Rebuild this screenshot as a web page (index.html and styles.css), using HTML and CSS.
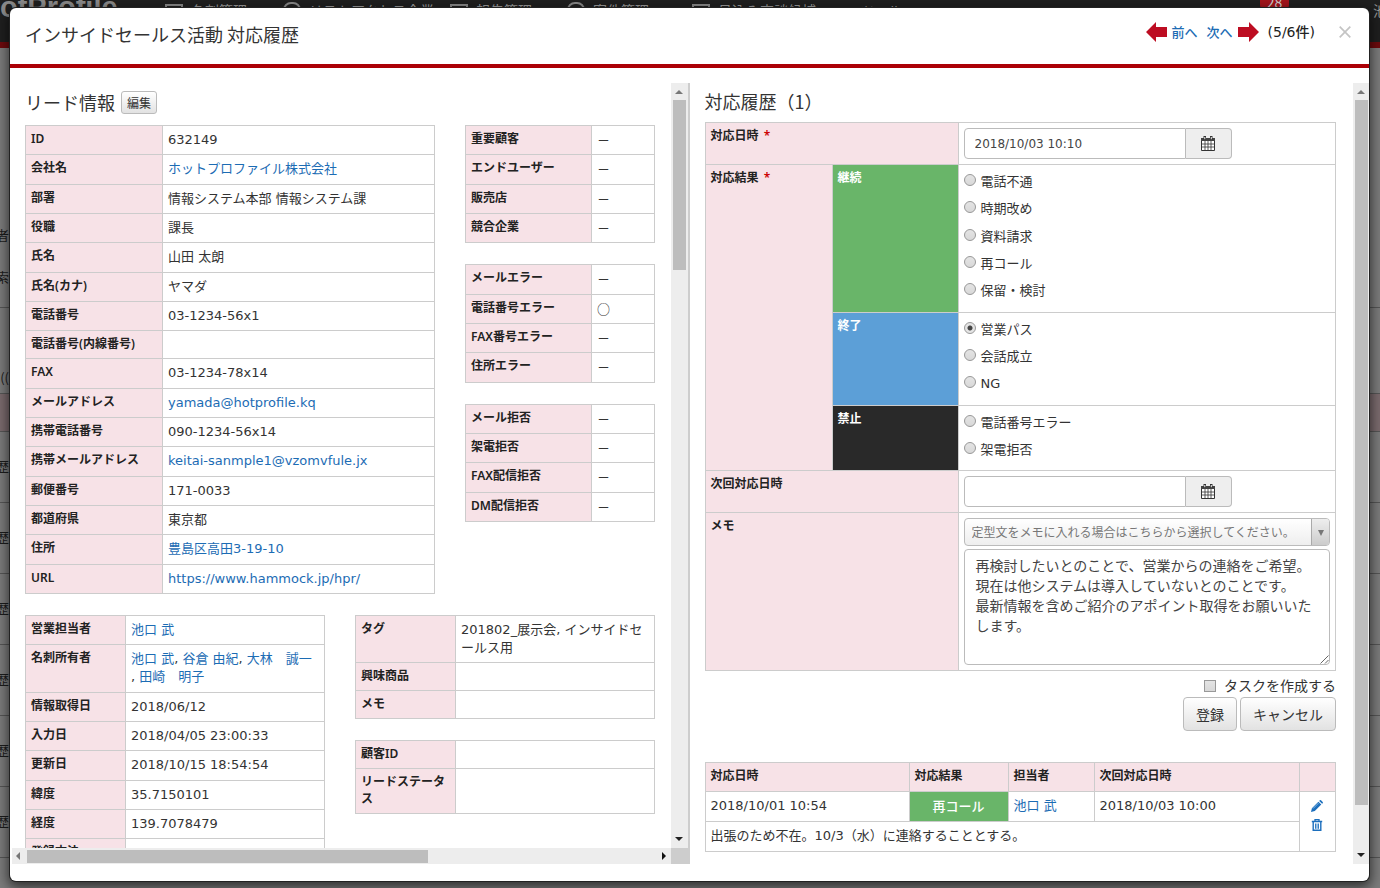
FILE: index.html
```html
<!DOCTYPE html>
<html lang="ja">
<head>
<meta charset="utf-8">
<title>インサイドセールス活動 対応履歴</title>
<link rel="stylesheet" href="styles.css">
</head>
<body>
<svg width="0" height="0" class="defs" aria-hidden="true">
  <symbol id="arrow" viewBox="0 0 21 20"><path d="M0 10 10 0v5h11v10H10v5z" fill="#bd0d22"/></symbol>
  <symbol id="calendar" viewBox="0 0 14 15">
    <path d="M1 3h12v11H1z" fill="#fff"/>
    <path d="M.5 2.500h13v12H.5zM.5 4.500h13" fill="none" stroke="#333"/>
    <path d="M1 8h12M1 11h12M4 5v9M7 5v9M10 5v9" fill="none" stroke="#333" stroke-width=".8"/>
    <path d="M0 2h14v3H0z" fill="#444"/>
    <path d="M2.500 0h2.500v4H2.500zM9 0h2.500v4H9z" fill="#333"/>
    <path d="M3.300 1h1v2.200h-1zM9.800 1h1v2.200h-1z" fill="#eee"/>
  </symbol>
  <symbol id="pencil" viewBox="0 0 12 12"><path d="M0 12l.9-3.800L7.400 1.700l2.900 2.900-6.500 6.500zM8.200.9l.6-.6q.6-.5 1.200 0l1.700 1.700q.5.600 0 1.200l-.6.6z" fill="#1c6fbd"/><path d="M2 8.600 7.500 3.100" stroke="#9cc6ea" stroke-width=".8"/></symbol>
  <symbol id="trash" viewBox="0 0 11 12"><path d="M3.500 2V.7h4V2M.3 2.500h10.400" fill="none" stroke="#1c6fbd" stroke-width="1.300"/><path d="M1.700 3v8.300h7.600V3" fill="none" stroke="#1c6fbd" stroke-width="1.400"/><path d="M4 4.500v5.300M5.500 4.500v5.300M7 4.500v5.300" stroke="#1c6fbd" stroke-width=".9"/></symbol>
</svg>

<div class="backdrop" aria-hidden="true">
  <div class="topbar">
    <b class="brand">otProfile</b>
    <span class="nav-item nav-1"><i class="glyph card"></i>名刺管理</span>
    <span class="nav-item nav-2"><i class="glyph round"></i>リストアクセス企業</span>
    <span class="nav-item nav-3"><i class="glyph card"></i>報告管理</span>
    <span class="nav-item nav-4"><i class="glyph round"></i>案件管理</span>
    <span class="nav-item nav-5"><i class="glyph card"></i>見込み商談候補</span>
    <span class="nav-item nav-6">ツール</span>
    <span class="badge">28</span>
    <span class="nav-item nav-7">池</span>
  </div>
  <div class="backpage">
    <div class="strip strip-head"><span>者</span><span>索</span></div>
    <div class="strip strip-tall"><span>((</span></div>
    <div class="strip strip-pink"></div>
    <div class="strip strip-row"><span>歴</span></div>
    <div class="strip strip-row"><span>歴</span></div>
    <div class="strip strip-row"><span>歴</span></div>
    <div class="strip strip-row"><span>歴</span></div>
    <div class="strip strip-row"><span>歴</span></div>
    <div class="strip strip-row"><span>歴</span></div>
  </div>
</div>

<main class="modal" role="dialog" aria-labelledby="dialog-title">
  <header class="modal-header">
    <h1 id="dialog-title">インサイドセールス活動 対応履歴</h1>
    <nav class="pager">
      <a href="#"><svg class="arrow"><use href="#arrow"/></svg>前へ</a>
      <a href="#">次へ<svg class="arrow flip"><use href="#arrow"/></svg></a>
      <span class="count">(5/6件)</span>
    </nav>
    <button class="close" type="button" aria-label="閉じる"><svg viewBox="0 0 12 12"><path d="M.7.700l10.600 10.600M11.300.700.700 11.300" stroke="#c4c4c4" stroke-width="1.700"/></svg></button>
  </header>

  <div class="modal-body">
    <section class="pane lead">
      <div class="lead-content">
        <div class="heading"><h2>リード情報</h2><button class="btn btn-small" type="button">編集</button></div>
        <div class="lead-top">
          <table class="info wide">
            <tr><th scope="row">ID</th><td>632149</td></tr>
            <tr><th scope="row">会社名</th><td><a href="#">ホットプロファイル株式会社</a></td></tr>
            <tr><th scope="row">部署</th><td>情報システム本部 情報システム課</td></tr>
            <tr><th scope="row">役職</th><td>課長</td></tr>
            <tr><th scope="row">氏名</th><td>山田 太朗</td></tr>
            <tr><th scope="row">氏名(カナ)</th><td>ヤマダ</td></tr>
            <tr><th scope="row">電話番号</th><td>03-1234-56x1</td></tr>
            <tr><th scope="row">電話番号(内線番号)</th><td></td></tr>
            <tr><th scope="row">FAX</th><td>03-1234-78x14</td></tr>
            <tr><th scope="row">メールアドレス</th><td><a href="#">yamada@hotprofile.kq</a></td></tr>
            <tr><th scope="row">携帯電話番号</th><td>090-1234-56x14</td></tr>
            <tr><th scope="row">携帯メールアドレス</th><td><a href="#">keitai-sanmple1@vzomvfule.jx</a></td></tr>
            <tr><th scope="row">郵便番号</th><td>171-0033</td></tr>
            <tr><th scope="row">都道府県</th><td>東京都</td></tr>
            <tr><th scope="row">住所</th><td><a href="#">豊島区高田3-19-10</a></td></tr>
            <tr><th scope="row">URL</th><td><a href="#">https://www.hammock.jp/hpr/</a></td></tr>
          </table>
          <div class="stack">
            <table class="info flags">
              <tr><th scope="row">重要顧客</th><td>－</td></tr>
              <tr><th scope="row">エンドユーザー</th><td>－</td></tr>
              <tr><th scope="row">販売店</th><td>－</td></tr>
              <tr><th scope="row">競合企業</th><td>－</td></tr>
            </table>
            <table class="info flags">
              <tr><th scope="row">メールエラー</th><td>－</td></tr>
              <tr><th scope="row">電話番号エラー</th><td>○</td></tr>
              <tr><th scope="row">FAX番号エラー</th><td>－</td></tr>
              <tr><th scope="row">住所エラー</th><td>－</td></tr>
            </table>
            <table class="info flags">
              <tr><th scope="row">メール拒否</th><td>－</td></tr>
              <tr><th scope="row">架電拒否</th><td>－</td></tr>
              <tr><th scope="row">FAX配信拒否</th><td>－</td></tr>
              <tr><th scope="row">DM配信拒否</th><td>－</td></tr>
            </table>
          </div>
        </div>
        <div class="lead-bottom">
          <table class="info half">
            <tr><th scope="row">営業担当者</th><td><a href="#">池口 武</a></td></tr>
            <tr><th scope="row">名刺所有者</th><td><a href="#">池口 武</a>, <a href="#">谷倉 由紀</a>, <a href="#">大林　誠一</a><br>, <a href="#">田崎　明子</a></td></tr>
            <tr><th scope="row">情報取得日</th><td>2018/06/12</td></tr>
            <tr><th scope="row">入力日</th><td>2018/04/05 23:00:33</td></tr>
            <tr><th scope="row">更新日</th><td>2018/10/15 18:54:54</td></tr>
            <tr><th scope="row">緯度</th><td>35.7150101</td></tr>
            <tr><th scope="row">経度</th><td>139.7078479</td></tr>
            <tr><th scope="row">登録方法</th><td></td></tr>
          </table>
          <div class="stack">
            <table class="info half">
              <tr><th scope="row">タグ</th><td>201802_展示会, インサイドセ<br>ールス用</td></tr>
              <tr><th scope="row">興味商品</th><td></td></tr>
              <tr><th scope="row">メモ</th><td></td></tr>
            </table>
            <table class="info half">
              <tr><th scope="row">顧客ID</th><td></td></tr>
              <tr><th scope="row">リードステータス</th><td></td></tr>
            </table>
          </div>
        </div>
      </div>
      <div class="vbar"><i class="tri up"></i><div class="thumb lead-thumb"></div><i class="tri down"></i></div>
      <div class="hbar"><i class="tri left"></i><div class="hthumb"></div><i class="tri right"></i></div>
      <div class="corner"></div>
    </section>

    <section class="pane history">
      <form class="history-content">
        <h2>対応履歴（1）</h2>
        <table class="info entry">
          <colgroup><col class="c-label"><col class="c-group"><col></colgroup>
          <tr><th colspan="2" scope="row"><label for="when">対応日時 <span class="req">*</span></label></th>
            <td><div class="date"><input id="when" type="text" value="2018/10/03 10:10"><button type="button" aria-label="日付を選択"><svg><use href="#calendar"/></svg></button></div></td></tr>
          <tr><th rowspan="3" scope="row">対応結果 <span class="req">*</span></th><th class="group go">継続</th>
            <td><div class="choices">
              <label><input type="radio" name="result">電話不通</label>
              <label><input type="radio" name="result">時期改め</label>
              <label><input type="radio" name="result">資料請求</label>
              <label><input type="radio" name="result">再コール</label>
              <label><input type="radio" name="result">保留・検討</label></div></td></tr>
          <tr><th class="group end">終了</th>
            <td><div class="choices">
              <label><input type="radio" name="result" checked>営業パス</label>
              <label><input type="radio" name="result">会話成立</label>
              <label><input type="radio" name="result">NG</label></div></td></tr>
          <tr><th class="group stop">禁止</th>
            <td><div class="choices">
              <label><input type="radio" name="result">電話番号エラー</label>
              <label><input type="radio" name="result">架電拒否</label></div></td></tr>
          <tr><th colspan="2" scope="row"><label for="next">次回対応日時</label></th>
            <td><div class="date"><input id="next" type="text"><button type="button" aria-label="日付を選択"><svg><use href="#calendar"/></svg></button></div></td></tr>
          <tr><th colspan="2" scope="row"><label for="memo">メモ</label></th>
            <td><div class="memo">
              <div class="select"><select aria-label="定型文"><option>定型文をメモに入れる場合はこちらから選択してください。</option></select><span class="select-arrow"></span></div>
              <div class="area"><textarea id="memo">再検討したいとのことで、営業からの連絡をご希望。
現在は他システムは導入していないとのことです。
最新情報を含めご紹介のアポイント取得をお願いいたします。</textarea><svg class="grip" viewBox="0 0 9 9"><path d="M.5 8.500l8-8M5 8.500 8.500 5" stroke="#666"/></svg></div>
            </div></td></tr>
        </table>
        <div class="task"><label><input type="checkbox">タスクを作成する</label></div>
        <div class="actions"><button class="btn" type="submit">登録</button><button class="btn" type="button">キャンセル</button></div>
        <table class="info log">
          <colgroup><col class="l-date"><col class="l-result"><col class="l-person"><col class="l-next"><col></colgroup>
          <thead><tr><th scope="col">対応日時</th><th scope="col">対応結果</th><th scope="col">担当者</th><th scope="col">次回対応日時</th><th></th></tr></thead>
          <tbody>
            <tr><td>2018/10/01 10:54</td><td class="result">再コール</td><td><a href="#">池口 武</a></td><td>2018/10/03 10:00</td>
              <td rowspan="2"><div class="tools"><button type="button" aria-label="編集"><svg><use href="#pencil"/></svg></button><button type="button" aria-label="削除"><svg><use href="#trash"/></svg></button></div></td></tr>
            <tr><td colspan="4">出張のため不在。10/3（水）に連絡することとする。</td></tr>
          </tbody>
        </table>
      </form>
      <div class="vbar"><i class="tri up"></i><div class="thumb history-thumb"></div><i class="tri down"></i></div>
    </section>
  </div>
</main>
</body>
</html>
```
FILE: styles.css
```css
* { box-sizing: border-box; }
body {
  margin: 0;
  height: 100vh;
  padding: 8px 11px 7px 10px;
  overflow: hidden;
  background: #777;
  color: #333;
  font: 13px/1.41 "DejaVu Sans", "Noto Sans CJK JP", sans-serif;
}
a { color: #1c6cb4; text-decoration: none; }
h1, h2 { margin: 0; font-size: 18px; font-weight: 400; line-height: 24px; font-family: "Noto Sans CJK JP", sans-serif; }
h1 { word-break: keep-all; }
button { font-family: inherit; color: #333; padding: 0; }
.defs { position: absolute; }

/* Dimmed page under the dialog */
.backdrop { position: absolute; inset: 0; overflow: hidden; }
.topbar { position: relative; height: 48px; background: #1f1f1f; border-bottom: 6px solid #6d0a0d; color: #999; font: 14px/20px "Noto Sans CJK JP", sans-serif; }
.brand { position: absolute; left: 0; top: -8px; font: bold 29px/30px "Liberation Sans", sans-serif; color: #8a8a8a; }
.nav-item { position: absolute; top: 0; display: flex; gap: 8px; white-space: nowrap; }
.nav-1 { left: 165px; } .nav-2 { left: 283px; } .nav-3 { left: 450px; } .nav-4 { left: 567px; }
.nav-5 { left: 692px; } .nav-6 { left: 860px; } .nav-7 { left: 1373px; }
.glyph { width: 18px; height: 14px; margin-top: 4px; border: 2px solid #888; }
.glyph.round { border-radius: 8px 8px 0 0; margin-top: 2px; }
.badge { position: absolute; left: 1260px; top: -9px; width: 29px; height: 18px; border-radius: 4px; background: #a3141b; color: #ccc; text-align: center; line-height: 23px; }
.backpage { background: #7b7b7b; height: 100%; }
.strip { border-bottom: 1px solid #555; font: 13px/20px "Noto Sans CJK JP", sans-serif; color: #1c1c1c; white-space: nowrap; }
.strip span { display: flex; justify-content: flex-end; width: 9px; }
.strip-head { height: 260px; padding-top: 177px; display: grid; align-content: start; gap: 22px; }
.strip-tall { height: 86px; padding-top: 60px; }
.strip-pink { height: 38px; background: #7a6a6d; }
.strip-row { height: 71px; padding-top: 24px; }

/* Dialog frame */
.modal { position: relative; display: flex; flex-direction: column; height: 100%; background: #fff; border-radius: 6px; box-shadow: 0 0 0 1px #222, 0 4px 12px 2px rgba(0, 0, 0, .6); }
.modal-header { display: flex; align-items: flex-start; height: 60px; padding: 14px 18px 0 15px; border-bottom: 4px solid #ab0006; }
.pager { display: flex; gap: 9px; margin-left: auto; font: 500 13px/20px "Noto Sans CJK JP", sans-serif; }
.pager a { display: flex; gap: 5px; align-items: center; }
.arrow { width: 21px; height: 20px; }
.flip { transform: scaleX(-1); }
.count { font-family: "DejaVu Sans", "Noto Sans CJK JP", sans-serif; font-size: 14px; color: #222; }
.close { border: 0; background: none; width: 12px; height: 12px; margin: 4px 0 0 24px; line-height: 0; }
.close svg { width: 12px; height: 12px; }
.modal-body { flex: 1; min-height: 0; display: grid; grid-template: minmax(0, 1fr) / 1fr 1fr; padding: 15px 0 17px; }

/* Scrolling panes */
.pane { display: grid; min-width: 0; min-height: 0; grid-template: minmax(0, 1fr) / minmax(0, 1fr) 16px; }
.pane.lead { grid-template: minmax(0, 1fr) 16px / minmax(0, 1fr) 17px; border-right: 2px solid #cdcdcd; }
.lead-content { overflow: hidden; padding: 7px 0 0 15px; }
.history-content { overflow: hidden; padding: 6px 17px 0 15px; }
.vbar { display: flex; flex-direction: column; align-items: center; background: #ededed; padding: 7px 0; }
.vbar .down { margin-top: auto; }
.thumb { width: 13px; margin-top: 6px; background: #bdbdbd; }
.lead-thumb { height: 170px; }
.history-thumb { height: 705px; }
.hbar { display: flex; align-items: center; background: #ededed; margin-left: 2px; padding: 0 5px 0 4px; }
.hbar .right { margin-left: auto; }
.hthumb { width: 401px; height: 13px; margin-left: 7px; background: #bdbdbd; }
.corner { background: #cdcdcd; }
.tri { width: 0; height: 0; border: 4px solid transparent; flex: none; }
.tri.up { border-top: 0; border-bottom-color: #777; }
.tri.down { border-bottom: 0; border-top-color: #222; }
.tri.left { border-left: 0; border-right-color: #777; }
.tri.right { border-right: 0; border-left-color: #111; }

/* Tables */
.info { border-collapse: collapse; table-layout: fixed; }
.info th, .info td { border: 1px solid #ccc; padding: 5px; text-align: left; vertical-align: top; }
.info th { background: #f7e2e7; font-family: "Noto Sans", "Noto Sans CJK JP", sans-serif; font-size: 12px; font-weight: 600; color: #222; }
.heading { display: flex; gap: 6px; align-items: center; margin-bottom: 11px; }
.lead-top, .lead-bottom { display: flex; align-items: flex-start; gap: 30px; }
.lead-bottom { margin-top: 21px; }
.stack { display: grid; gap: 21px; }
.wide { width: 410px; } .wide th { width: 137px; }
.flags { width: 190px; } .flags th { width: 126px; }
.flags td { font-family: "Noto Sans CJK JP", sans-serif; font-weight: 500; }
.half { width: 300px; } .half th { width: 100px; }

/* Buttons */
.btn { height: 34px; padding: 0 12px; border: 1px solid #bbb; border-radius: 4px; background: linear-gradient(#fff, #e2e2e2); font-size: 14px; }
.btn-small { height: 23px; padding: 0 5px; border-radius: 3px; font-size: 12px; }

/* Entry form */
.entry { width: 100%; margin-top: 9px; }
.c-label { width: 127px; } .c-group { width: 126px; }
.req { color: #c00; margin-left: 2px; }
.info .group { color: #fff; font-weight: 700; }
.info .go { background: #69b569; } .info .end { background: #5c9fd7; } .info .stop { background: #292929; }
.date { display: flex; width: 268px; height: 31px; }
.date input { flex: 1; min-width: 0; padding: 0 10px; border: 1px solid #bbb; border-radius: 4px 0 0 4px; font: 12px "DejaVu Sans", sans-serif; color: #444; }
.date button { width: 46px; border: 1px solid #bbb; border-left: 0; border-radius: 0 4px 4px 0; background: #eee; line-height: 0; }
.date svg { width: 14px; height: 15px; }
.choices { display: grid; gap: 9px; padding: 3px 0 6px; }
.choices label { display: flex; gap: 5px; }
input[type=radio], input[type=checkbox] { appearance: none; margin: 0; width: 12px; height: 12px; border: 1px solid #999; background: linear-gradient(#e4e4e4, #d8d8d8); flex: none; }
input[type=radio] { margin-top: 1px; border-radius: 50%; }
input[type=radio]:checked { background: radial-gradient(circle, #444 0 2px, #e4e4e4 3px); }
.memo { display: grid; gap: 3px; }
.select, .area { position: relative; }
.select select { display: block; appearance: none; width: 100%; height: 28px; padding: 0 20px 2px 7px; border: 1px solid #bbb; border-radius: 4px; background: linear-gradient(#fff, #eee); font: 12px "Noto Sans CJK JP", sans-serif; color: #777; }
.select-arrow { position: absolute; right: 1px; top: 1px; bottom: 1px; width: 18px; border-left: 1px solid #aaa; border-radius: 0 3px 3px 0; background: linear-gradient(#eee, #ccc); pointer-events: none; }
.select-arrow::after { content: ""; position: absolute; left: 6px; top: 11px; border: 3px solid transparent; border-top: 6px solid #777; border-bottom: 0; }
.area textarea { display: block; width: 100%; height: 116px; resize: none; overflow: hidden; padding: 5px 11px; border: 1px solid #bbb; border-radius: 4px; font: 14px/20px "Noto Sans CJK JP", sans-serif; color: #444; }
.grip { position: absolute; right: 1px; bottom: 1px; width: 9px; height: 9px; }
.task { display: flex; justify-content: flex-end; margin-top: 5px; font-size: 14px; line-height: 20px; }
.task label { display: flex; gap: 8px; align-items: center; }
.actions { display: flex; justify-content: flex-end; gap: 3px; margin-top: 1px; }

/* Log table */
.log { width: 100%; margin-top: 31px; }
.l-date { width: 204px; } .l-result { width: 99px; } .l-person { width: 86px; } .l-next { width: 205px; }
.log th { height: 29px; }
.log td { height: 30px; }
.info .result { background: #69b569; color: #fff; font-weight: 500; text-align: center; font-family: "Noto Sans CJK JP", sans-serif; }
.tools { display: grid; justify-items: center; gap: 7px; padding-top: 3px; }
.tools button { border: 0; background: none; line-height: 0; }
.tools svg { width: 12px; height: 12px; }
```
